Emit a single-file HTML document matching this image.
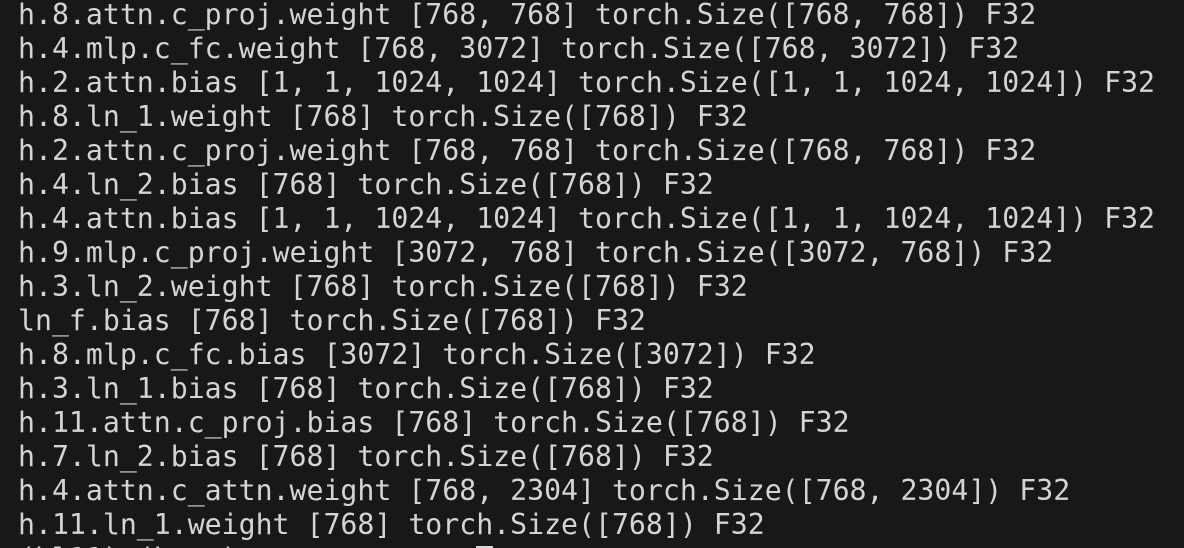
<!DOCTYPE html>
<html><head><style>
html,body{margin:0;padding:0;background:#181818;width:1184px;height:548px;overflow:hidden}
pre{margin:-2px 0 0 0;padding:0 0 0 18px;font-family:"DejaVu Sans Mono","Liberation Mono",monospace;font-size:28.2px;line-height:34px;color:#d4d4d4;white-space:pre}
.c{display:inline-block;width:17px;height:30px;background:#d6d6d6;vertical-align:-8px}
</style></head><body><pre>h.8.attn.c_proj.weight [768, 768] torch.Size([768, 768]) F32
h.4.mlp.c_fc.weight [768, 3072] torch.Size([768, 3072]) F32
h.2.attn.bias [1, 1, 1024, 1024] torch.Size([1, 1, 1024, 1024]) F32
h.8.ln_1.weight [768] torch.Size([768]) F32
h.2.attn.c_proj.weight [768, 768] torch.Size([768, 768]) F32
h.4.ln_2.bias [768] torch.Size([768]) F32
h.4.attn.bias [1, 1, 1024, 1024] torch.Size([1, 1, 1024, 1024]) F32
h.9.mlp.c_proj.weight [3072, 768] torch.Size([3072, 768]) F32
h.3.ln_2.weight [768] torch.Size([768]) F32
ln_f.bias [768] torch.Size([768]) F32
h.8.mlp.c_fc.bias [3072] torch.Size([3072]) F32
h.3.ln_1.bias [768] torch.Size([768]) F32
h.11.attn.c_proj.bias [768] torch.Size([768]) F32
h.7.ln_2.bias [768] torch.Size([768]) F32
h.4.attn.c_attn.weight [768, 2304] torch.Size([768, 2304]) F32
h.11.ln_1.weight [768] torch.Size([768]) F32
(hl11) (base) user@mac ~ % <span class="c"></span></pre></body></html>
